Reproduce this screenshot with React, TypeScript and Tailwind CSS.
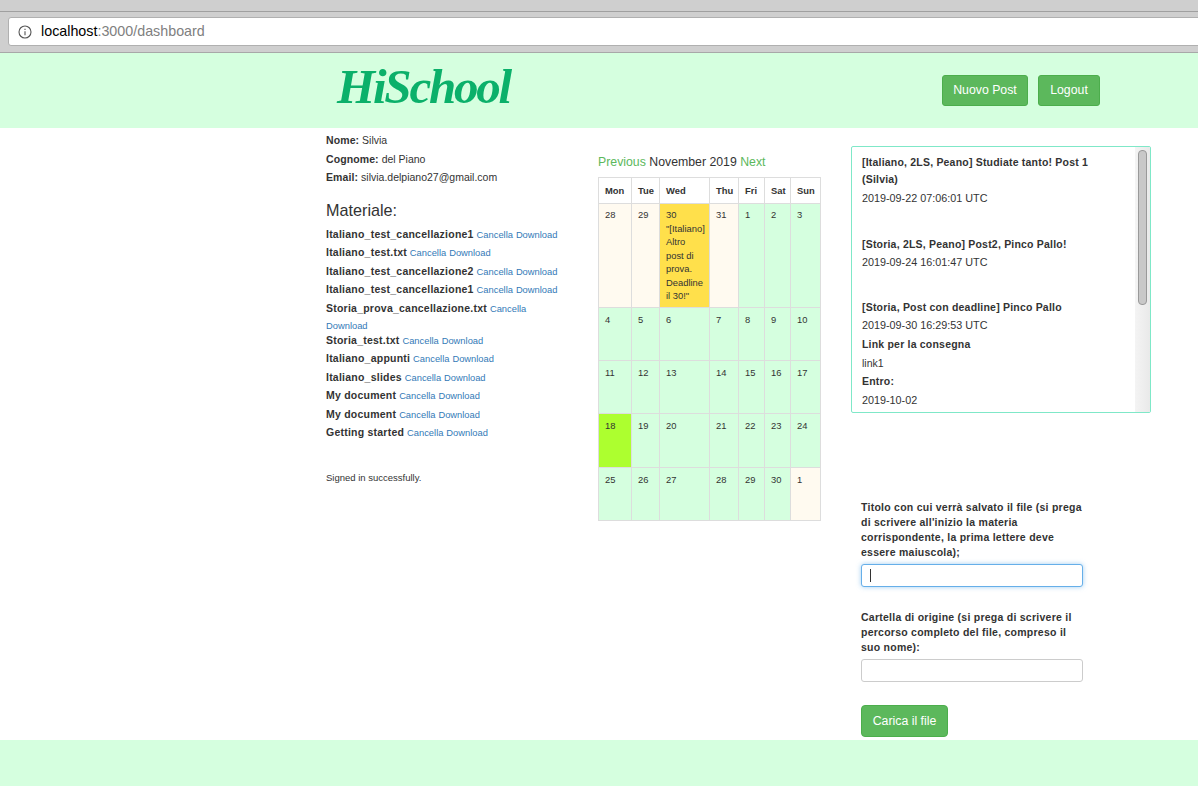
const files = [
  "Italiano_test_cancellazione1",
  "Italiano_test.txt",
  "Italiano_test_cancellazione2",
  "Italiano_test_cancellazione1",
  "Storia_prova_cancellazione.txt",
  "Storia_test.txt",
  "Italiano_appunti",
  "Italiano_slides",
  "My document",
  "My document",
  "Getting started",
];

const weeks = [
  ["28", "29", "30", "31", "1", "2", "3"],
  ["4", "5", "6", "7", "8", "9", "10"],
  ["11", "12", "13", "14", "15", "16", "17"],
  ["18", "19", "20", "21", "22", "23", "24"],
  ["25", "26", "27", "28", "29", "30", "1"],
];

function cellColor(week: number, day: number) {
  if (week === 0 && day === 2) return "bg-[#ffe04b]";
  if (week === 3 && day === 0) return "bg-[#adff2f]";
  if ((week === 0 && day < 4) || (week === 4 && day === 6)) return "bg-[#fffaf0]";
  return "bg-[#d5ffdf]";
}

function Calendar() {
  return (
    <div className="w-[223px]">
      <div className="text-[12.3px] leading-[17px] mt-[26px] mb-[6px] text-[#333]">
        <a className="text-[#5cb85c]">Previous</a> November 2019 <a className="text-[#5cb85c]">Next</a>
      </div>
      <table className="w-[222px] table-fixed border-collapse text-[9.4px] leading-[13.5px] text-[#333]">
        <colgroup>
          <col className="w-[33px]" />
          <col className="w-[28px]" />
          <col className="w-[50px]" />
          <col className="w-[29px]" />
          <col className="w-[26px]" />
          <col className="w-[26px]" />
          <col className="w-[30px]" />
        </colgroup>
        <thead>
          <tr className="h-[26px]">
            {["Mon", "Tue", "Wed", "Thu", "Fri", "Sat", "Sun"].map((d) => (
              <th key={d} className="border border-[#ddd] pl-[6px] text-left font-bold">{d}</th>
            ))}
          </tr>
        </thead>
        <tbody>
          {weeks.map((week, w) => (
            <tr key={w} className={w === 0 ? "h-[104px]" : w === 3 ? "h-[54px]" : "h-[53px]"}>
              {week.map((day, d) => (
                <td key={d} className={`border border-[#ddd] pl-[6px] pr-0 pb-[2px] align-top ${w === 0 ? "pt-[4px]" : "pt-[5px]"} ${cellColor(w, d)}`}>
                  <div>{day}</div>
                  {w === 0 && d === 2 && (
                    <div>
                      "[Italiano]<br />Altro<br />post di<br />prova.<br />Deadline<br />il 30!"
                    </div>
                  )}
                </td>
              ))}
            </tr>
          ))}
        </tbody>
      </table>
    </div>
  );
}

function Posts() {
  return (
    <div className="relative mt-[18px] h-[267px] w-[300px] overflow-hidden rounded-[2px] border border-[#7fe8c8] pl-[10px] pr-[30px] pt-[7px] text-[10.8px] leading-[18.5px] text-[#333]">
      <p className="mb-[1px] text-[10.5px] font-bold leading-[17px] tracking-[0.2px]">[Italiano, 2LS, Peano] Studiate tanto! Post 1 (Silvia)</p>
      <p>2019-09-22 07:06:01 UTC</p>
      <p className="mt-[27px] text-[10.5px] font-bold tracking-[0.2px]">[Storia, 2LS, Peano] Post2, Pinco Pallo!</p>
      <p>2019-09-24 16:01:47 UTC</p>
      <p className="mt-[26px] text-[10.5px] font-bold tracking-[0.2px]">[Storia, Post con deadline] Pinco Pallo</p>
      <div className="leading-[18.8px]">
        <p>2019-09-30 16:29:53 UTC</p>
        <p className="text-[10.5px] font-bold tracking-[0.2px]">Link per la consegna</p>
        <p className="text-[10.5px]">link1</p>
        <p className="text-[10.5px] font-bold tracking-[0.2px]">Entro:</p>
        <p>2019-10-02</p>
      </div>
      {/* scrollbar */}
      <div className="absolute right-0 top-0 h-full w-[15px] bg-gradient-to-r from-[#f4f4f4] to-[#e9e9e9]">
        <div className="ml-[3px] mt-[3px] h-[155px] w-[9px] rounded-[4px] border border-[#999] bg-[#c8c8c8]" />
      </div>
    </div>
  );
}

function UploadForm() {
  return (
    <form className="ml-[10px] mt-[87px] w-[222px] text-[10.5px] leading-[15.1px] font-bold tracking-[0.25px] text-[#333]">
      <label className="block mb-[4px]">
        Titolo con cui verrà salvato il file (si prega di scrivere all'inizio la materia corrispondente, la prima lettere deve essere maiuscola);
      </label>
      <div className="relative">
        <div className="h-[23px] rounded-[3px] border border-[#66afe9] bg-white shadow-[0_0_5px_rgba(102,175,233,0.6)]" />
        <div className="absolute left-[9px] top-[5px] h-[13px] w-px bg-[#333]" />
      </div>
      <label className="block mt-[22.6px] mb-[3.7px]">
        Cartella di origine (si prega di scrivere il percorso completo del file, compreso il suo nome):
      </label>
      <input className="block h-[23px] w-full rounded-[3px] border border-[#ccc] bg-white outline-none" />
      <button type="button" className="mt-[23px] h-[32px] w-[87px] rounded-[4px] border border-[#4cae4c] bg-[#5cb85c] pt-[1px] text-[12.3px] font-normal tracking-normal text-white">
        Carica il file
      </button>
    </form>
  );
}

export default function App() {
  return (
    <div className="h-[786px] w-[1198px] overflow-hidden bg-white font-['Liberation_Sans',Arial,sans-serif]">
      {/* browser chrome */}
      <div className="h-[53px] overflow-hidden bg-[#cfcfcf] pt-[11px] border-b border-[#a8a8a8]">
        <div className="h-[41px] border-t border-[#a0a0a0] pt-[5px] pl-[8px]">
          <div className="flex h-[29px] w-[1200px] items-center rounded-[3px] border border-[#b0b0b0] bg-white pl-[9px] pt-[1px] text-[14.3px]">
            <svg width="14" height="14" viewBox="0 0 14 14" fill="none" stroke="#555" strokeWidth="1.1">
              <circle cx="7" cy="7" r="6" />
              <path d="M7 6.2v4M7 3.8v1.2" />
            </svg>
            <span className="ml-[9px] text-black">localhost</span>
            <span className="text-[#808080]">:3000/dashboard</span>
          </div>
        </div>
      </div>

      {/* header */}
      <header className="flex h-[75px] bg-[#d5ffdf]">
        <div className="ml-[337px] mt-[6px] h-[60px] w-[174px] whitespace-nowrap font-['Liberation_Serif',serif] text-[49px] leading-[56px] font-bold italic tracking-[-2.2px] text-[#0bb06a]">
          HiSchool
        </div>
        <div className="ml-[431px] mt-[22px] flex gap-[10px] text-[12.3px]">
          <button className="h-[31px] w-[86px] rounded-[3px] border border-[#4cae4c] bg-[#5cb85c] text-white">Nuovo Post</button>
          <button className="h-[31px] w-[62px] rounded-[3px] border border-[#4cae4c] bg-[#5cb85c] text-white">Logout</button>
        </div>
      </header>

      {/* main */}
      <main className="flex h-[612px] pl-[326px]">
        <div className="w-[272px] text-[10.5px] leading-[18.5px] text-[#333]">
          <div className="pt-[3px]">
            <p><b className="tracking-[0.1px]">Nome:</b> Silvia</p>
            <p><b className="tracking-[0.1px]">Cognome:</b> del Piano</p>
            <p><b className="tracking-[0.1px]">Email:</b> silvia.delpiano27@gmail.com</p>
          </div>
          <h3 className="mt-[13px] mb-[5px] text-[16.2px] leading-[20px]">Materiale:</h3>
          <div className="w-[240px]">
            {files.map((name, i) => (
              <p key={i} className={i === 4 ? "mt-[1px] mb-[-3px] leading-[17px]" : ""}>
                <b className="tracking-[0.23px]">{name}</b>{" "}
                <a className="text-[9.35px] leading-none text-[#337ab7]">Cancella</a>{" "}
                <a className="text-[9.35px] leading-none text-[#337ab7]">Download</a>
              </p>
            ))}
          </div>
          <p className="mt-[31px] text-[9.5px] leading-none">Signed in successfully.</p>
        </div>
        <Calendar />
        <div className="ml-[30px]">
          <Posts />
          <UploadForm />
        </div>
      </main>

      {/* footer */}
      <footer className="h-[46px] bg-[#d5ffdf]" />
    </div>
  );
}
